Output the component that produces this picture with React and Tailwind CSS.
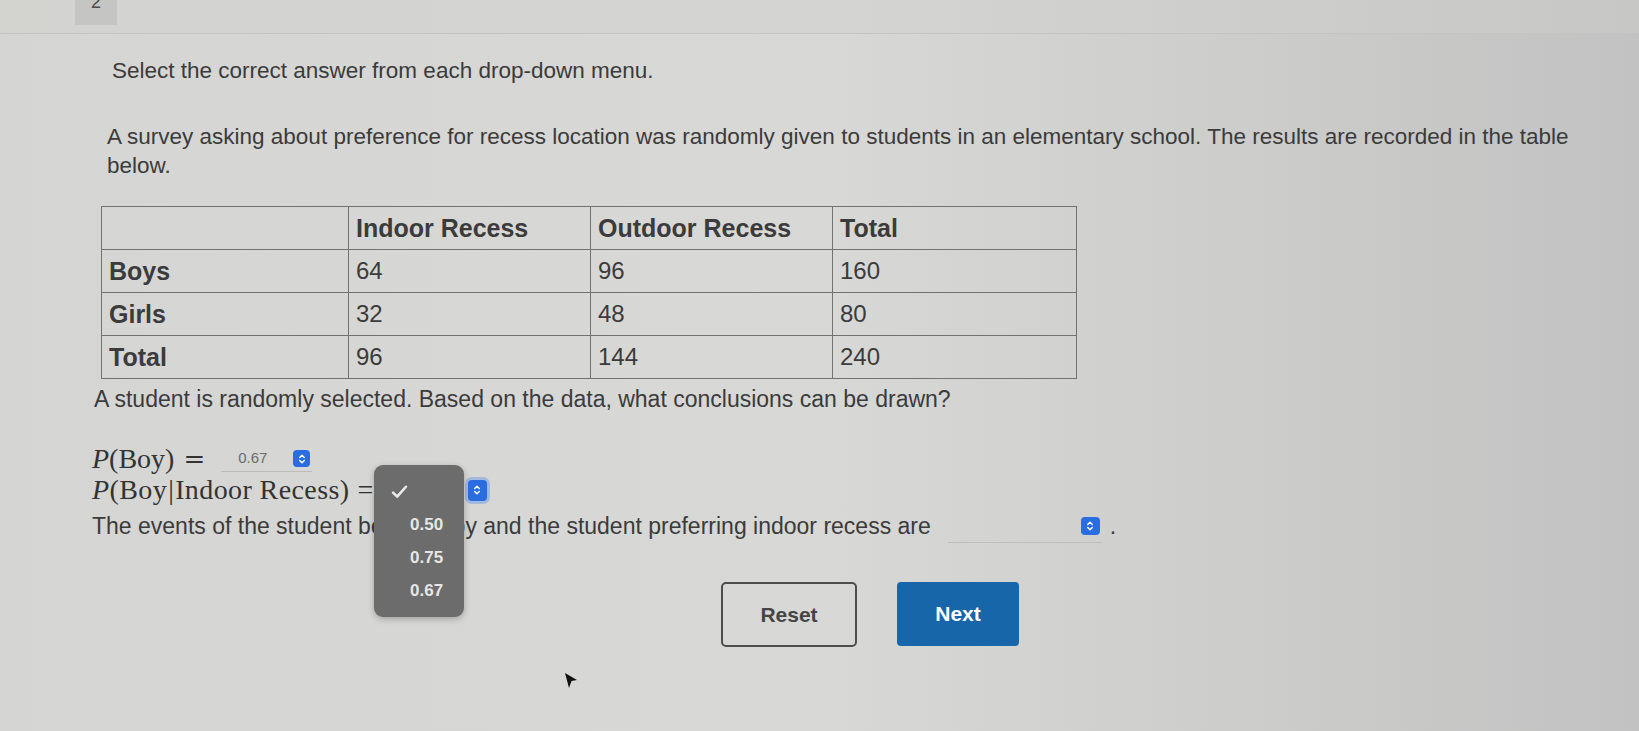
import React from "react";

function Stepper({ className }) {
  return (
    <span className={"inline-flex items-center justify-center rounded-[4px] bg-[#2a6de0] " + className}>
      <svg viewBox="0 0 10 14" className="w-[8px] h-[12px]" fill="none" stroke="white" strokeWidth="1.8" strokeLinecap="round" strokeLinejoin="round">
        <path d="M2.2 5.2 L5 2.4 L7.8 5.2" />
        <path d="M2.2 8.8 L5 11.6 L7.8 8.8" />
      </svg>
    </span>
  );
}

const cell = "border-[1.5px] border-[#727272] pl-[7px] text-left align-middle";

export default function App() {
  const rows = [
    ["Boys", "64", "96", "160"],
    ["Girls", "32", "48", "80"],
    ["Total", "96", "144", "240"],
  ];
  return (
    <div className="relative w-[1639px] h-[731px] overflow-hidden bg-linear-to-r from-[#d5d5d3] via-[#d8d8d6] to-[#c2c2c2] text-[#3b3b3b] font-['Liberation_Sans',Arial,sans-serif]">
      {/* top bar */}
      <div className="h-[34px] border-b border-[#c4c4c2] bg-[#cfcfcd]/40 flex">
        <div className="ml-[75px] w-[42px] h-[25px] bg-[#c5c5c3] overflow-hidden flex justify-center">
          <span className="text-[18px] leading-[18px] -mt-[7px] text-[#4a4a4a]">2</span>
        </div>
      </div>

      <div className="pl-[101px]">
        <p className="mt-[22px] ml-[11px] text-[22.5px] leading-[30px]">
          Select the correct answer from each drop-down menu.
        </p>
        <p className="mt-[36px] ml-[6px] w-[1490px] text-[22.5px] leading-[29px]">
          A survey asking about preference for recess location was randomly given to students in an elementary school. The results are recorded in the table below.
        </p>

        <table className="mt-[26px] border-collapse text-[24px] leading-none">
          <colgroup>
            <col className="w-[247px]" />
            <col className="w-[242px]" />
            <col className="w-[242px]" />
            <col className="w-[244px]" />
          </colgroup>
          <thead>
            <tr className="h-[43px]">
              <th className={cell}></th>
              <th className={cell + " font-bold text-[25px]"}>Indoor Recess</th>
              <th className={cell + " font-bold text-[25px]"}>Outdoor Recess</th>
              <th className={cell + " font-bold text-[25px]"}>Total</th>
            </tr>
          </thead>
          <tbody>
            {rows.map((r) => (
              <tr key={r[0]} className="h-[43px]">
                <td className={cell + " font-bold text-[25px]"}>{r[0]}</td>
                <td className={cell}>{r[1]}</td>
                <td className={cell}>{r[2]}</td>
                <td className={cell}>{r[3]}</td>
              </tr>
            ))}
          </tbody>
        </table>

        <p className="mt-[5px] -ml-[7px] text-[23px] leading-[30px]">
          A student is randomly selected. Based on the data, what conclusions can be drawn?
        </p>

        {/* P(Boy) */}
        <div className="mt-[29px] -ml-[9px] h-[32px] flex items-center">
          <span className="font-['Liberation_Serif','Times_New_Roman',serif] text-[28px] leading-[32px] text-[#333]">
            <i>P</i>(Boy)<span className="ml-[9px] font-['DejaVu_Serif',serif] text-[26px]">=</span>
          </span>
          <span className="ml-[16px] inline-flex items-center justify-between w-[91px] h-[26px] border-b border-[#bdbdbb] pl-[17px] pr-[2px]">
            <span className="text-[15px] text-[#6c6c6c]">0.67</span>
            <Stepper className="w-[17px] h-[17px]" />
          </span>
        </div>

        {/* P(Boy|Indoor Recess) */}
        <div className="-mt-[1px] -ml-[9px] h-[32px] flex items-center">
          <span className="font-['Liberation_Serif','Times_New_Roman',serif] text-[28px] leading-[32px] text-[#333] tracking-[0.4px]">
            <i>P</i>(Boy<span className="mx-[1px]">|</span>Indoor Recess)<span className="ml-[8px]">=</span>
          </span>
          <span className="ml-[6px] inline-flex items-center justify-end w-[109px] h-[28px] pr-[2px]">
            <Stepper className="w-[19px] h-[21px] shadow-[0_0_0_3px_rgba(100,150,235,0.45)]" />
          </span>
        </div>

        {/* events line */}
        <div className="mt-[5px] -ml-[9px] h-[30px] flex items-center text-[23px] leading-[30px] whitespace-nowrap">
          <span>The events of the student being a boy and the student preferring indoor recess are</span>
          <span className="ml-[17px] inline-flex items-center justify-end w-[154px] h-[28px] border-b border-[#bebebc] pr-[2px] mt-[6px]">
            <Stepper className="w-[19px] h-[18px] mb-[6px]" />
          </span>
          <span className="ml-[8px]">.</span>
        </div>

        {/* buttons */}
        <div className="mt-[41px] ml-[620px] flex gap-[40px]">
          <button className="w-[136px] h-[65px] rounded-[5px] border-[2.5px] border-[#4d4d4d] bg-transparent text-[21px] font-bold text-[#454545]">
            Reset
          </button>
          <button className="w-[122px] h-[64px] rounded-[4px] bg-[#1766a9] text-[21px] font-bold text-white">
            Next
          </button>
        </div>
      </div>

      {/* open dropdown menu */}
      <div className="absolute left-[374px] top-[465px] w-[90px] h-[152px] rounded-[9px] bg-[#6c6c6c] shadow-[0_2px_6px_rgba(0,0,0,0.25)] pt-[10px]">
        <div className="h-[33px] flex items-center pl-[17px]">
          <svg viewBox="0 0 14 12" className="w-[17px] h-[14px]" fill="none" stroke="#eaeaea" strokeWidth="2.2" strokeLinecap="round" strokeLinejoin="round">
            <path d="M1.5 6.5 L5 10 L12.5 1.5" />
          </svg>
        </div>
        {["0.50", "0.75", "0.67"].map((v) => (
          <div key={v} className="h-[33px] flex items-center pl-[36px] text-[17px] font-bold text-[#e6e6e6]">
            {v}
          </div>
        ))}
      </div>

      {/* mouse cursor */}
      <svg className="absolute left-[563px] top-[671px] w-[16px] h-[20px]" viewBox="0 0 16 20">
        <path d="M2 2 L14 9 L8.5 10 L6 17 Z" fill="#111" />
      </svg>
    </div>
  );
}
